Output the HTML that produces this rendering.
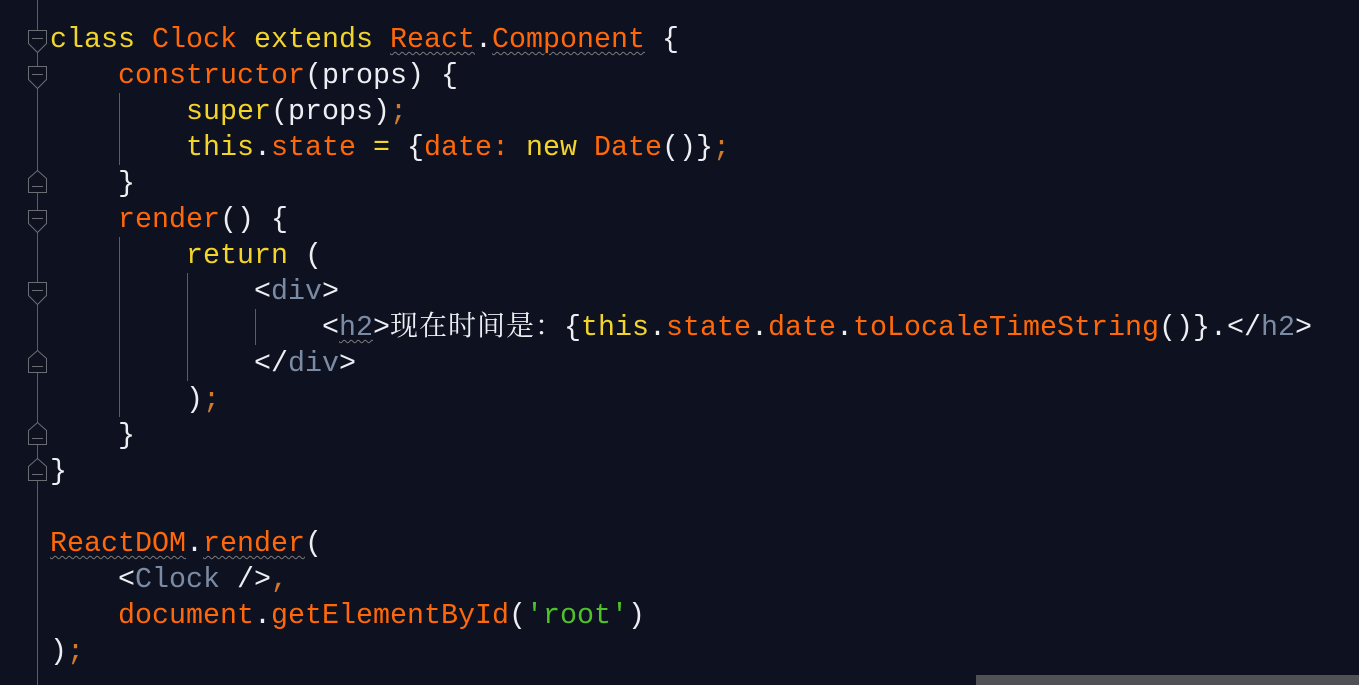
<!DOCTYPE html>
<html><head><meta charset="utf-8"><style>
html,body{margin:0;padding:0;background:#0d1120;width:1359px;height:685px;overflow:hidden;position:relative}
.l{position:absolute;left:50px;height:36px;line-height:36px;font-family:"Liberation Mono","Noto Sans CJK SC",monospace;font-size:28.33px;color:#eceef2;white-space:pre}
.y{color:#f2d42a}.o{color:#ff680a}.g{color:#7b8ba3}.s{color:#d07a2c}.gr{color:#4fc22a}
.w{text-decoration:underline wavy #7a7a7a;text-decoration-thickness:1px;text-underline-offset:4px}
.cj{font-family:"Noto Serif CJK SC","Noto Sans CJK SC",serif;font-size:28px;line-height:0;letter-spacing:1px}
.gd{position:absolute;width:1px;background:#5a5e68}
</style></head><body>
<div class="gd" style="left:37px;top:0;height:685px"></div>
<div class="gd" style="left:119px;top:93px;height:72px"></div>
<div class="gd" style="left:119px;top:237px;height:180px"></div>
<div class="gd" style="left:187px;top:273px;height:108px"></div>
<div class="gd" style="left:255px;top:309px;height:36px"></div>
<svg width="60" height="685" style="position:absolute;left:0;top:0" fill="#0d1120" stroke="#6a6d74" stroke-width="1">
<g><path d="M28.5 30.5H46.5V43.5L37.5 52.5L28.5 43.5Z"/><path d="M32 38.5H43"/></g>
<g transform="translate(0,36)"><path d="M28.5 30.5H46.5V43.5L37.5 52.5L28.5 43.5Z"/><path d="M32 38.5H43"/></g>
<g transform="translate(0,180)"><path d="M28.5 30.5H46.5V43.5L37.5 52.5L28.5 43.5Z"/><path d="M32 38.5H43"/></g>
<g transform="translate(0,252)"><path d="M28.5 30.5H46.5V43.5L37.5 52.5L28.5 43.5Z"/><path d="M32 38.5H43"/></g>
<g transform="translate(0,183)"><path d="M37.5 -12.5L46.5 -4.5V9.5H28.5V-4.5Z"/><path d="M32 3.5H43"/></g>
<g transform="translate(0,363)"><path d="M37.5 -12.5L46.5 -4.5V9.5H28.5V-4.5Z"/><path d="M32 3.5H43"/></g>
<g transform="translate(0,435)"><path d="M37.5 -12.5L46.5 -4.5V9.5H28.5V-4.5Z"/><path d="M32 3.5H43"/></g>
<g transform="translate(0,471)"><path d="M37.5 -12.5L46.5 -4.5V9.5H28.5V-4.5Z"/><path d="M32 3.5H43"/></g>
</svg>
<div class="l" style="top:22px"><span class="y">class</span> <span class="o">Clock</span> <span class="y">extends</span> <span class="o w">React</span>.<span class="o w">Component</span> {</div>
<div class="l" style="top:58px">    <span class="o">constructor</span>(props) {</div>
<div class="l" style="top:94px">        <span class="y">super</span>(props)<span class="s">;</span></div>
<div class="l" style="top:130px">        <span class="y">this</span>.<span class="o">state</span> <span class="y">=</span> {<span class="o">date:</span> <span class="y">new</span> <span class="o">Date</span>()}<span class="s">;</span></div>
<div class="l" style="top:166px">    }</div>
<div class="l" style="top:202px">    <span class="o">render</span>() {</div>
<div class="l" style="top:238px">        <span class="y">return</span> (</div>
<div class="l" style="top:274px">            &lt;<span class="g">div</span>&gt;</div>
<div class="l" style="top:310px">                &lt;<span class="g w">h2</span>&gt;<span class="cj">现在时间是：</span>{<span class="y">this</span>.<span class="o">state</span>.<span class="o">date</span>.<span class="o">toLocaleTimeString</span>()}.&lt;/<span class="g">h2</span>&gt;</div>
<div class="l" style="top:346px">            &lt;/<span class="g">div</span>&gt;</div>
<div class="l" style="top:382px">        )<span class="s">;</span></div>
<div class="l" style="top:418px">    }</div>
<div class="l" style="top:454px">}</div>
<div class="l" style="top:526px"><span class="o w">ReactDOM</span>.<span class="o w">render</span>(</div>
<div class="l" style="top:562px">    &lt;<span class="g">Clock</span> /&gt;<span class="s">,</span></div>
<div class="l" style="top:598px">    <span class="o">document</span>.<span class="o">getElementById</span>(<span class="gr">'root'</span>)</div>
<div class="l" style="top:634px">)<span class="s">;</span></div>
<div style="position:absolute;left:976px;top:675px;width:383px;height:10px;background:#4f5154"></div>
</body></html>
